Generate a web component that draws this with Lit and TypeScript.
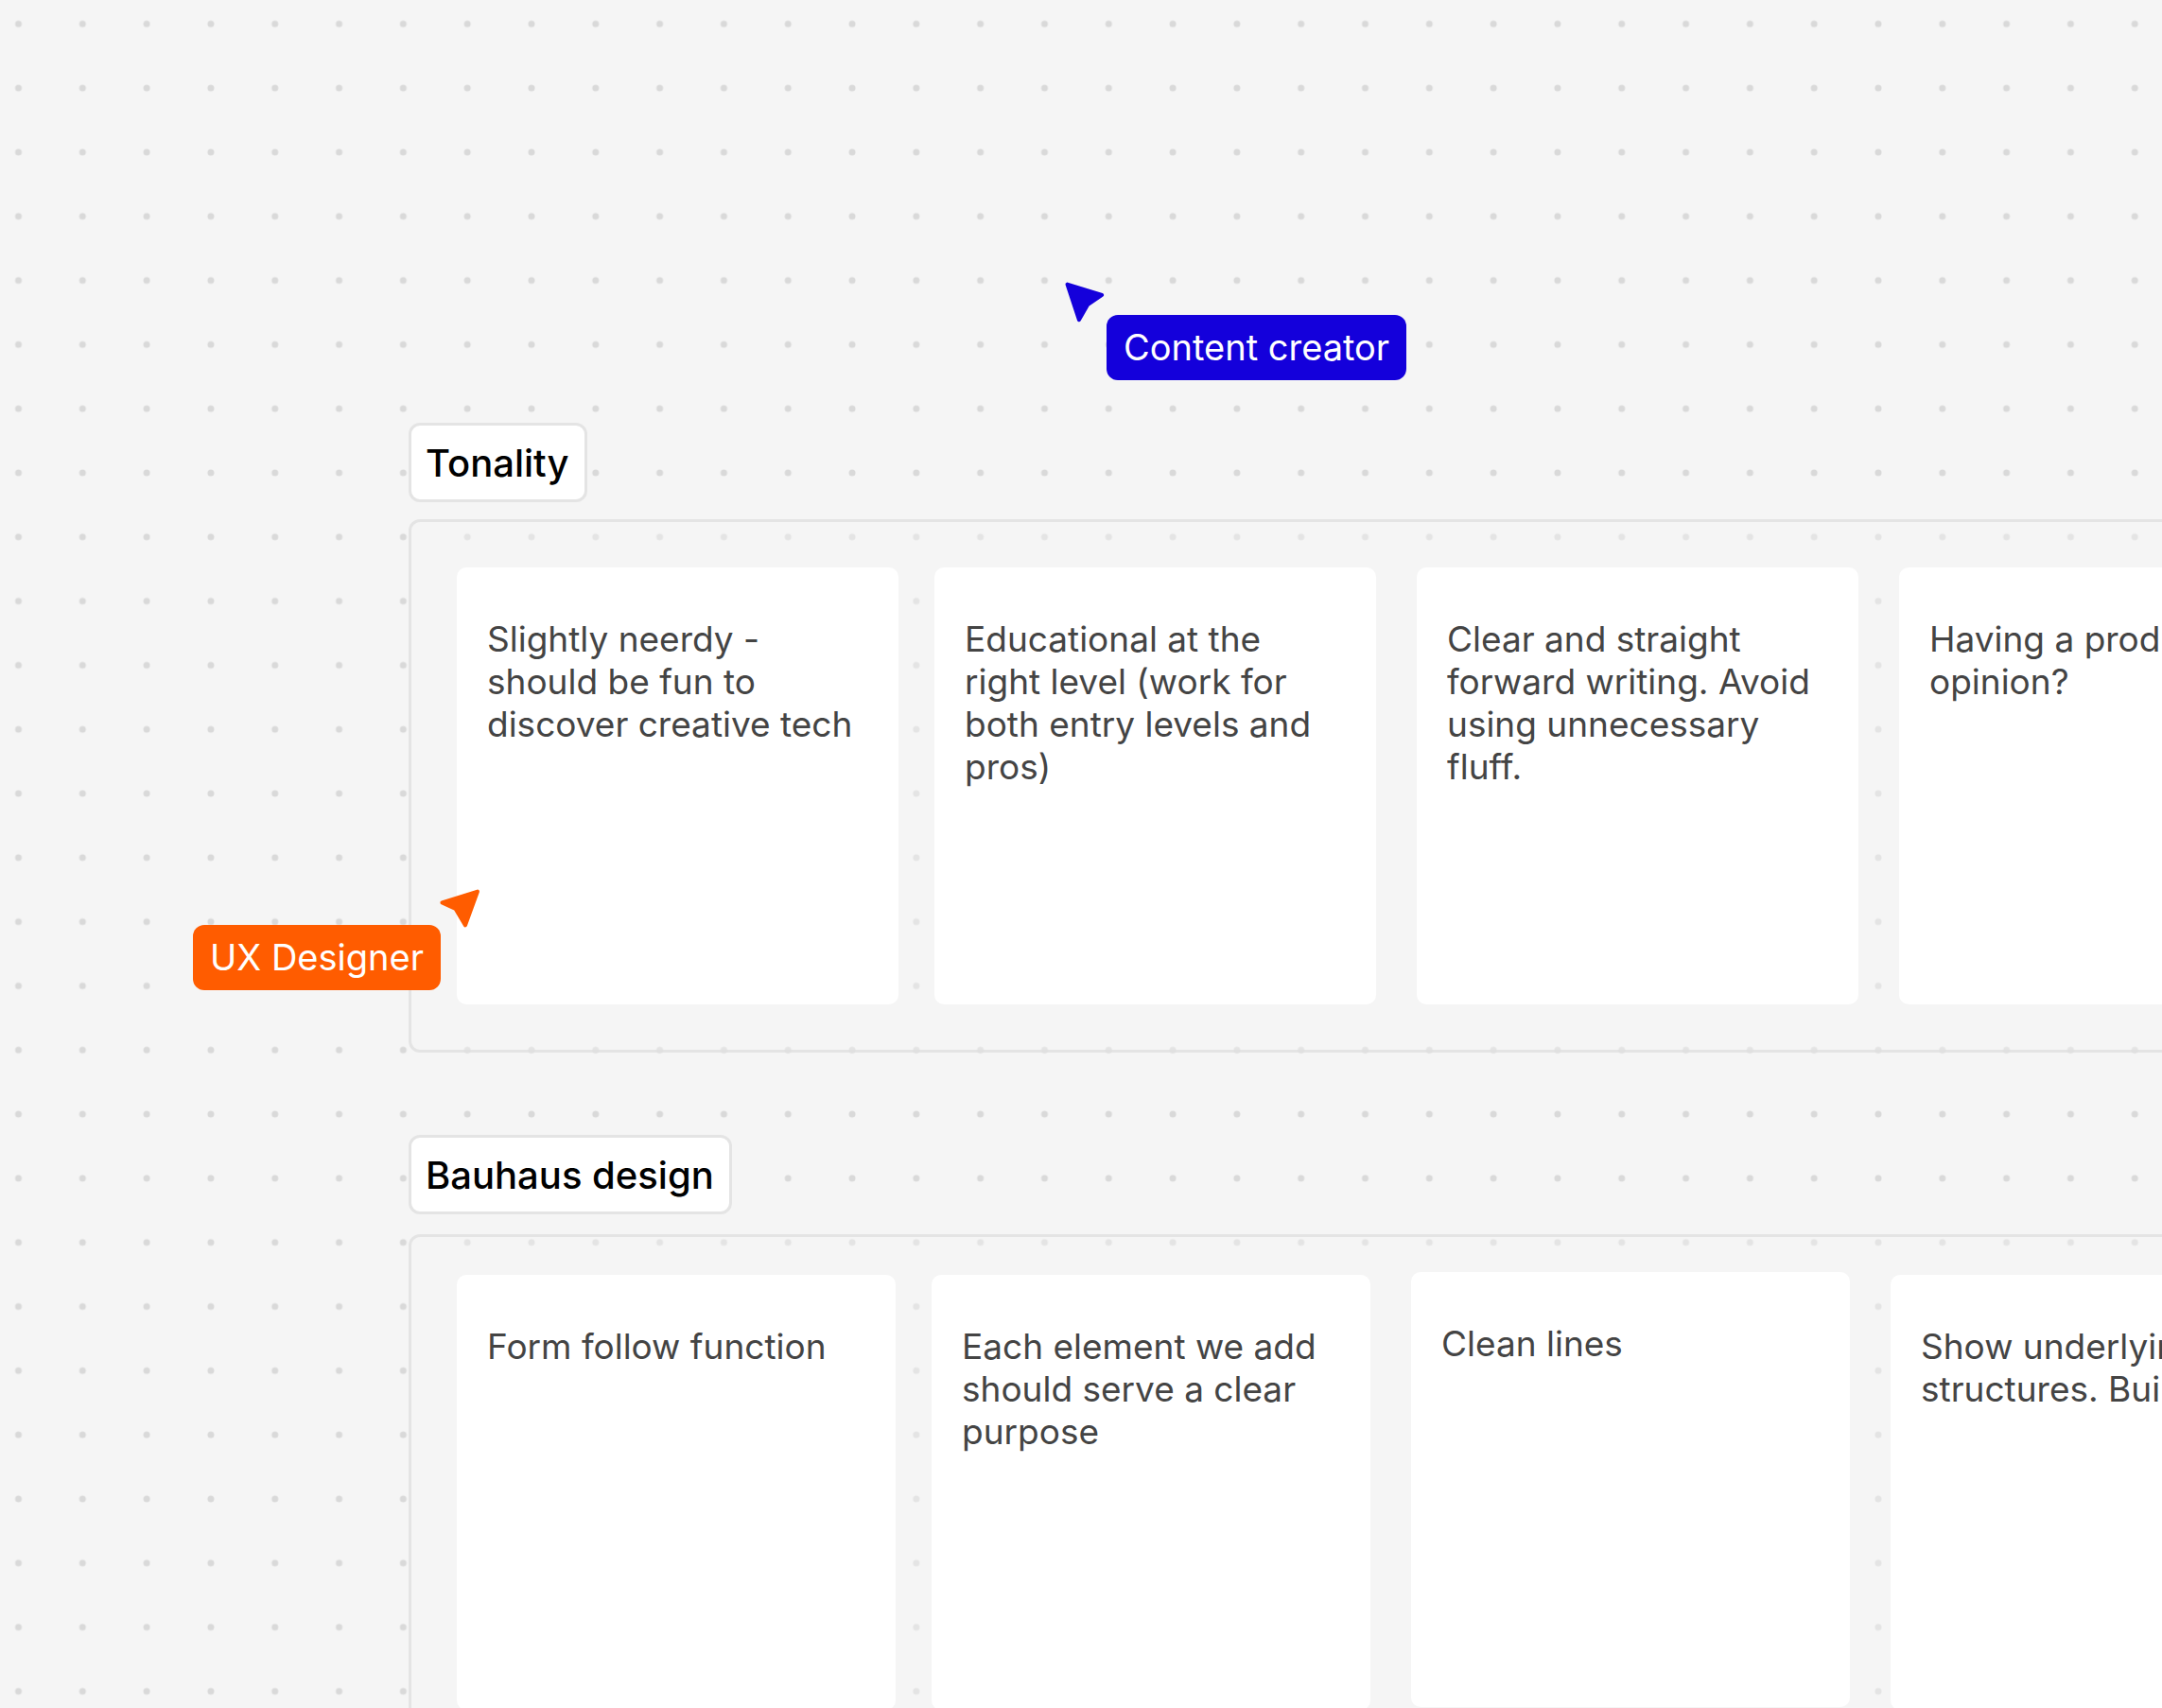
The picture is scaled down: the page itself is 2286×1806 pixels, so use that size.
import { LitElement, html, svg, css } from "lit";
import { customElement, property } from "lit/decorators.js";

interface Note {
  text: string;
  raised?: boolean;
}

interface Board {
  id: string;
  title: string;
  notes: Note[];
}

const BOARDS: Board[] = [
  {
    id: "tonality",
    title: "Tonality",
    notes: [
      { text: "Slightly neerdy - should be fun to discover creative tech" },
      { text: "Educational at the right level (work for both entry levels and pros)" },
      { text: "Clear and straight forward writing. Avoid using unnecessary fluff." },
      { text: "Having a product opinion?" },
    ],
  },
  {
    id: "bauhaus",
    title: "Bauhaus design",
    notes: [
      { text: "Form follow function" },
      { text: "Each element we add should serve a clear purpose" },
      { text: "Clean lines", raised: true },
      { text: "Show underlying structures. Building" },
    ],
  },
];

/* A collaborator's pointer with a name tag. */
@customElement("user-cursor")
export class UserCursor extends LitElement {
  @property() name = "";
  @property({ reflect: true }) facing: "left" | "right" = "left";

  static styles = css`
    :host {
      display: flex;
      flex-direction: column;
      align-items: flex-start;
      font-family: Inter, "Liberation Sans", sans-serif;
    }
    .arrow {
      display: block;
      width: 44px;
      height: 44px;
      fill: currentColor;
      stroke: currentColor;
      stroke-width: 4;
      stroke-linejoin: round;
    }
    :host([facing="right"]) .arrow {
      align-self: flex-end;
    }
    .tag {
      box-sizing: border-box;
      padding: 12px 18px;
      border-radius: 12px;
      background: currentColor;
      font-size: 38px;
      line-height: 45px;
      white-space: nowrap;
    }
    :host([facing="left"]) .tag {
      margin: -8px 0 0 45px;
    }
    :host([facing="right"]) .tag {
      margin: -4px 42px 0 0;
    }
    .name {
      color: #fff;
    }
  `;

  render() {
    const shape =
      this.facing === "left"
        ? svg`<path d="M3.5 3.6 40.2 14.8 25.2 25 15.9 41.2Z" />`
        : svg`<path d="M41 4.6 3.4 16.4 17.6 23 28 40.4Z" />`;
    return html`
      <svg class="arrow" viewBox="0 0 44 44" aria-hidden="true">${shape}</svg>
      <div class="tag"><span class="name">${this.name}</span></div>
    `;
  }
}

@customElement("app-root")
export class AppRoot extends LitElement {
  static styles = css`
    :host {
      display: block;
      font-family: Inter, "Liberation Sans", sans-serif;
    }
    .canvas {
      position: relative;
      box-sizing: border-box;
      height: 100vh;
      padding: 447px 0 0 432px;
      overflow: hidden;
      background: #f5f5f5;
    }
    .dots {
      position: absolute;
      inset: 0;
      width: 100%;
      height: 100%;
    }
    .boards {
      position: relative;
      display: flex;
      flex-direction: column;
      align-items: flex-start;
      gap: 87px;
    }
    .board {
      display: flex;
      flex-direction: column;
      align-items: flex-start;
      gap: 18px;
    }
    .board.bauhaus {
      gap: 21px;
    }
    .title {
      box-sizing: border-box;
      margin: 0;
      padding: 16px 16px 14px 15px;
      border: 3px solid #e4e4e4;
      border-radius: 12px;
      background: #fff;
      color: #000;
      font-size: 40px;
      font-weight: 500;
      line-height: 48px;
      white-space: nowrap;
    }
    .frame {
      display: grid;
      grid-template-columns: 505px 510px 510px 467px;
      align-items: start;
      margin: 0;
      padding: 48px;
      border: 3px solid rgba(225, 225, 225, 0.85);
      border-radius: 12px;
      background: rgba(245, 245, 245, 0.4);
      background-clip: padding-box;
      list-style: none;
    }
    .bauhaus .frame {
      grid-template-columns: 502px 507px 507px 464px;
      padding-top: 40px;
    }
    .note {
      box-sizing: border-box;
      width: 467px;
      min-height: 462px;
      padding: 53px 32px;
      border-radius: 10px;
      background: #fff;
      color: #444;
      font-size: 37px;
      line-height: 45px;
    }
    .bauhaus .note {
      width: 464px;
      min-height: 460px;
    }
    .note.raised {
      margin-top: -3px;
    }
    .creator,
    .designer {
      position: absolute;
    }
    .creator {
      top: 297px;
      left: 1125px;
      color: #1400db;
    }
    .designer {
      top: 938px;
      left: 204px;
      color: #ff5c00;
    }
  `;

  render() {
    return html`
      <main class="canvas">
        <svg class="dots" aria-hidden="true">
          <defs>
            <pattern id="grid" x="-14.4" y="-8.6" width="67.81" height="67.81" patternUnits="userSpaceOnUse">
              <circle cx="33.9" cy="33.9" r="3.5" fill="#d9d9d9" />
            </pattern>
          </defs>
          <rect width="100%" height="100%" fill="url(#grid)" />
        </svg>
        <div class="boards">
          ${BOARDS.map(
            (board) => html`
              <section class="board ${board.id}" aria-labelledby=${board.id}>
                <h2 class="title" id=${board.id}>${board.title}</h2>
                <ul class="frame">
                  ${board.notes.map(
                    (note) => html`<li class="note ${note.raised ? "raised" : ""}">${note.text}</li>`
                  )}
                </ul>
              </section>
            `
          )}
        </div>
        <user-cursor class="creator" name="Content creator" facing="left"></user-cursor>
        <user-cursor class="designer" name="UX Designer" facing="right"></user-cursor>
      </main>
    `;
  }
}
